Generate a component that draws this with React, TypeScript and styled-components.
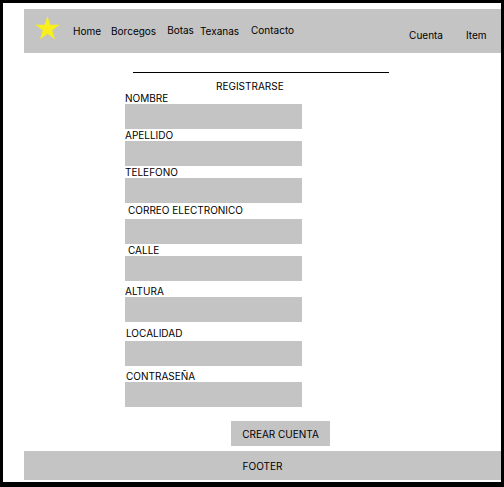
import styled, { createGlobalStyle } from 'styled-components'

const GlobalStyle = createGlobalStyle`
	body {
		margin: 0;
		font-family: Inter, 'Liberation Sans', sans-serif;
		color: #000;
	}
	* {
		box-sizing: border-box;
	}
`

type FieldType = {
	label: string
	labelTop: number
	indent: number
	fieldTop: number
}

const fields: FieldType[] = [
	{ label: 'NOMBRE', labelTop: 0, indent: 0, fieldTop: 0 },
	{ label: 'APELLIDO', labelTop: 0, indent: 0, fieldTop: 0 },
	{ label: 'TELEFONO', labelTop: 0, indent: 0, fieldTop: 0 },
	{ label: 'CORREO ELECTRONICO', labelTop: 1, indent: 3, fieldTop: 3 },
	{ label: 'CALLE', labelTop: 0, indent: 3, fieldTop: 0 },
	{ label: 'ALTURA', labelTop: 4, indent: 0, fieldTop: 0 },
	{ label: 'LOCALIDAD', labelTop: 5, indent: 1, fieldTop: 2 },
	{ label: 'CONTRASEÑA', labelTop: 4, indent: 1, fieldTop: 0 },
]

type NavItemType = {
	text: string
	left: number
	top: number
}

const navItems: NavItemType[] = [
	{ text: 'Home', left: 13, top: 16 },
	{ text: 'Borcegos', left: 10, top: 16 },
	{ text: 'Botas', left: 11, top: 15 },
	{ text: 'Texanas', left: 6, top: 16 },
	{ text: 'Contacto', left: 12, top: 15 },
]

function Star() {
	return (
		<StarIcon width='25' height='24' viewBox='0 0 25 24'>
			<polygon
				points='12.5,0 15.4,8.8 24.8,8.8 17.2,14.3 20.1,23.4 12.5,17.8 4.9,23.4 7.8,14.3 0.2,8.8 9.6,8.8'
				fill='#f8ef1c'
			/>
		</StarIcon>
	)
}

export default function App() {
	return (
		<>
			<GlobalStyle />
			<Frame>
				<Nav>
					<Star />
					{navItems.map((item) => (
						<NavLink key={item.text} $left={item.left} $top={item.top}>
							{item.text}
						</NavLink>
					))}
					<NavLink $left={115} $top={20}>
						Cuenta
					</NavLink>
					<NavLink $left={23} $top={20}>
						Item
					</NavLink>
				</Nav>
				<Main>
					<Rule />
					<Title>REGISTRARSE</Title>
					{fields.map((f) => (
						<FieldGroup key={f.label}>
							<Label $top={f.labelTop} $indent={f.indent}>
								{f.label}
							</Label>
							<Input $top={f.fieldTop} />
						</FieldGroup>
					))}
					<SubmitButton>CREAR CUENTA</SubmitButton>
				</Main>
				<Footer>FOOTER</Footer>
			</Frame>
		</>
	)
}

const Frame = styled.div`
	width: 504px;
	height: 487px;
	border: 3px solid #000;
	border-bottom-width: 5px;
	background: #fff;
	padding: 6px 0 0 21px;
	display: flex;
	flex-direction: column;
`
const Nav = styled.nav`
	height: 44px;
	background: #c4c4c4;
	display: flex;
	align-items: flex-start;
	flex-shrink: 0;
`
const StarIcon = styled.svg`
	margin: 7px 0 0 11px;
	flex-shrink: 0;
`
const NavLink = styled.a<{ $left: number; $top: number }>`
	margin-left: ${(p) => p.$left}px;
	margin-top: ${(p) => p.$top}px;
	font-size: 10px;
	line-height: 12px;
	white-space: nowrap;
	color: #000;
`
const Main = styled.main`
	display: flex;
	flex-direction: column;
	align-items: flex-start;
	padding-left: 101px;
`
const Rule = styled.hr`
	margin: 19px 0 0 8px;
	width: 256px;
	height: 1px;
	border: none;
	background: #000;
`
const Title = styled.h2`
	margin: 7px 0 0 91px;
	font-size: 10px;
	line-height: 12px;
	font-weight: 400;
`
const FieldGroup = styled.div`
	display: flex;
	flex-direction: column;
	width: 177px;
`
const Label = styled.label<{ $top: number; $indent: number }>`
	margin-top: ${(p) => p.$top}px;
	padding-left: ${(p) => p.$indent}px;
	font-size: 10px;
	line-height: 12px;
	white-space: nowrap;
`
const Input = styled.div<{ $top: number }>`
	margin-top: ${(p) => p.$top}px;
	height: 25px;
	background: #c4c4c4;
`
const SubmitButton = styled.button`
	margin: 14px 0 0 106px;
	width: 99px;
	height: 25px;
	border: none;
	padding: 0;
	background: #c4c4c4;
	font-family: inherit;
	font-size: 10px;
	color: #000;
`
const Footer = styled.footer`
	margin-top: 5px;
	height: 29px;
	background: #c4c4c4;
	display: flex;
	align-items: center;
	justify-content: center;
	font-size: 10px;
`
